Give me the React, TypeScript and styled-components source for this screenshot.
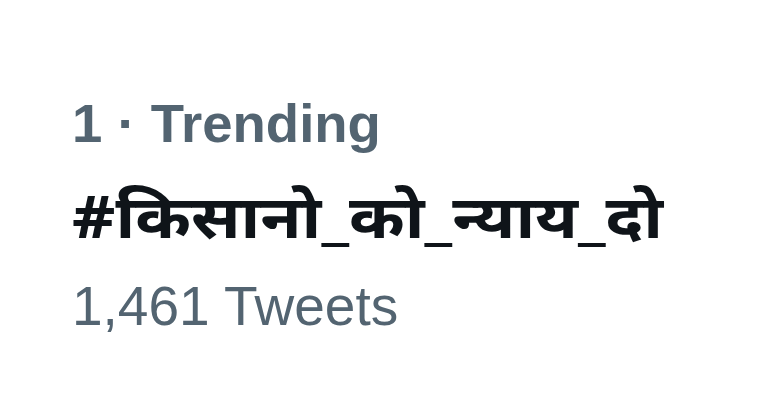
import React from 'react';
import styled, {createGlobalStyle} from 'styled-components';

const GlobalStyle = createGlobalStyle`
  html, body {
    margin: 0;
    padding: 0;
    background: #ffffff;
  }
`;

const Card = styled.div`
  width: 770px;
  height: 417px;
  box-sizing: border-box;
  padding: 92px 0 0 72px;
  display: flex;
  flex-direction: column;
  align-items: flex-start;
  background: #ffffff;
`;

const Meta = styled.div<{$bold?: boolean}>`
  font-family: "Liberation Sans", Arial, sans-serif;
  font-size: ${p => (p.$bold ? '54.5px' : '55px')};
  line-height: 64px;
  font-weight: ${p => (p.$bold ? 700 : 400)};
  color: #536471;
  white-space: nowrap;
`;

const Topic = styled.div`
  font-family: "Noto Sans", "Liberation Sans", sans-serif;
  font-size: 60px;
  line-height: 118px;
  font-weight: 700;
  color: #0f1419;
  white-space: nowrap;
  transform: scaleX(1.12);
  transform-origin: left center;
`;

export default function App() {
  return (
    <>
      <GlobalStyle/>
      <Card>
        <Meta $bold>1 · Trending</Meta>
        <Topic>#किसानो_को_न्याय_दो</Topic>
        <Meta>1,461 Tweets</Meta>
      </Card>
    </>
  );
}
